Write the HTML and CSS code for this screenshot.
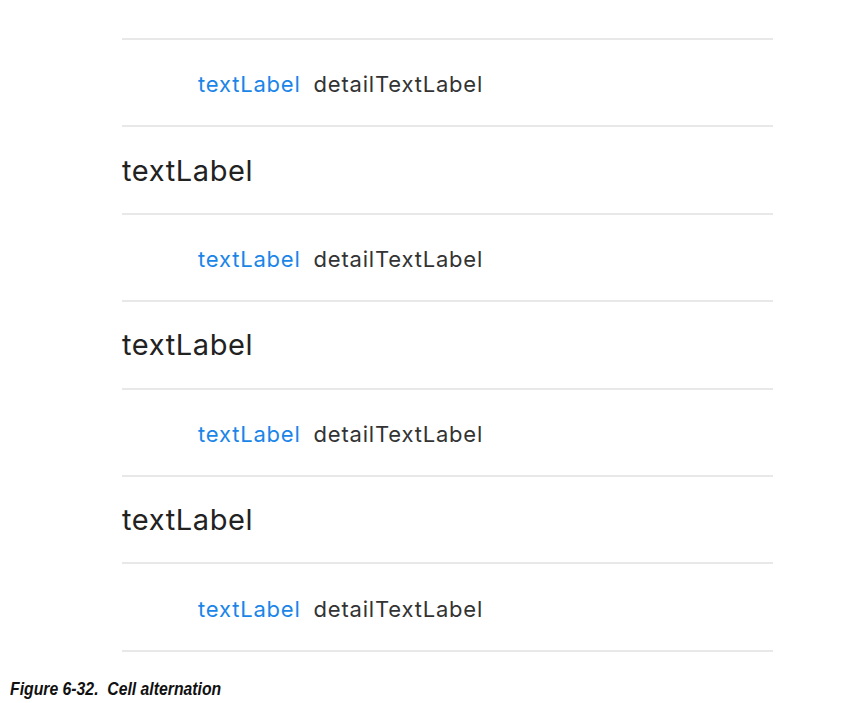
FILE: index.html
```html
<!DOCTYPE html>
<html>
<head>
<meta charset="utf-8">
<link rel="stylesheet" href="styles.css">
</head>
<body>
<div class="table">
  <div class="cell detail"><span class="tl">textLabel</span><span class="dl">detailTextLabel</span></div>
  <div class="cell basic"><span class="big">textLabel</span></div>
  <div class="cell detail"><span class="tl">textLabel</span><span class="dl">detailTextLabel</span></div>
  <div class="cell basic"><span class="big">textLabel</span></div>
  <div class="cell detail"><span class="tl">textLabel</span><span class="dl">detailTextLabel</span></div>
  <div class="cell basic"><span class="big">textLabel</span></div>
  <div class="cell detail last"><span class="tl">textLabel</span><span class="dl">detailTextLabel</span></div>
</div>
<p class="caption"><span class="cap-text">Figure 6-32.&nbsp; Cell alternation</span></p>
</body>
</html>
```
FILE: styles.css
```css
html, body {
  margin: 0;
  padding: 0;
  background: #ffffff;
}
body {
  width: 841px;
  height: 703px;
  overflow: hidden;
  font-family: Inter, "Liberation Sans", sans-serif;
}
.table {
  margin-left: 122px;
  width: 651px;
  padding-top: 38px;
}
.cell {
  height: 85.4px;
  border-top: 2px solid #e8e8e8;
  display: flex;
  align-items: center;
  box-sizing: content-box;
}
.cell.last {
  border-bottom: 2px solid #e8e8e8;
}
.detail {
  padding-left: 76px;
  padding-top: 3px;
  height: 82.4px;
  gap: 13px;
}
.tl {
  color: #1a85e8;
  font-size: 22px;
  letter-spacing: 0.8px;
}
.dl {
  color: #333333;
  font-size: 22px;
  letter-spacing: 0.8px;
}
.big {
  color: #222222;
  font-size: 29px;
  letter-spacing: 0.6px;
}
.caption {
  margin: 26px 0 0 10px;
  font-family: "Liberation Sans", sans-serif;
  font-weight: bold;
  font-style: italic;
  font-size: 19px;
  line-height: 22px;
  color: #111111;
}
.cap-text {
  display: inline-block;
  transform: scaleX(0.83);
  transform-origin: left center;
  white-space: nowrap;
}
```
